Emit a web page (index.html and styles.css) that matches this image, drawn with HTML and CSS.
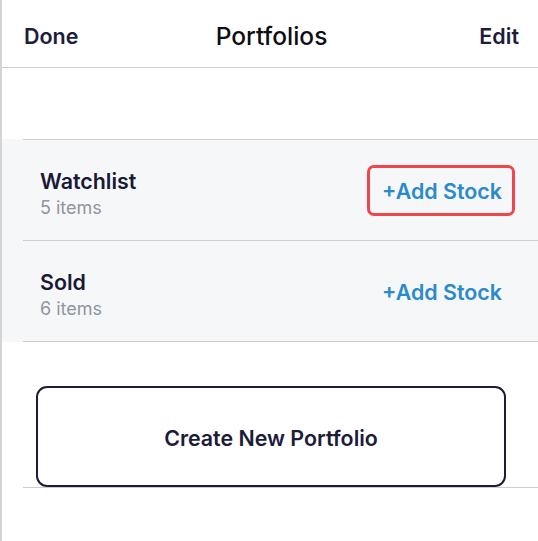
FILE: index.html
```html
<!DOCTYPE html>
<html>
<head>
<meta charset="utf-8">
<link rel="stylesheet" href="styles.css">
</head>
<body>
<div class="screen">
  <header class="nav">
    <span class="nav-btn">Done</span>
    <span class="nav-title">Portfolios</span>
    <span class="nav-btn nav-right">Edit</span>
  </header>
  <div class="spacer"></div>
  <section class="list">
    <div class="rows">
      <div class="row">
        <div class="info">
          <div class="name">Watchlist</div>
          <div class="count">5 items</div>
        </div>
        <span class="add highlight">+Add Stock</span>
      </div>
      <div class="row">
        <div class="info">
          <div class="name">Sold</div>
          <div class="count">6 items</div>
        </div>
        <span class="add">+Add Stock</span>
      </div>
    </div>
  </section>
  <section class="create">
    <div class="create-inner">
      <div class="create-btn">Create New Portfolio</div>
    </div>
  </section>
</div>
</body>
</html>
```

FILE: styles.css
```css
html, body {
  margin: 0;
  padding: 0;
  background: #ffffff;
}
body {
  font-family: Inter, "Noto Sans", "Liberation Sans", sans-serif;
}
.screen {
  width: 536px;
  height: 541px;
  border-left: 2px solid #d4d4d6;
  background: #ffffff;
  overflow: hidden;
}
.nav {
  box-sizing: border-box;
  height: 68px;
  border-bottom: 1px solid #cfcfd2;
  display: grid;
  grid-template-columns: 1fr auto 1fr;
  align-items: center;
  padding: 4px 19px 0 22px;
}
.nav-btn {
  font-size: 21.5px;
  font-weight: 600;
  color: #1d1d3d;
}
.nav-right {
  justify-self: end;
}
.nav-title {
  font-size: 24.5px;
  font-weight: 500;
  color: #0d0d14;
}
.spacer {
  height: 71px;
}
.list {
  background: #f6f7f9;
  padding-left: 21px;
}
.rows {
  border-top: 1px solid #cdced2;
}
.row {
  height: 100px;
  border-bottom: 1px solid #cdced2;
  display: flex;
  justify-content: space-between;
  align-items: flex-start;
  padding: 0 36px 0 17px;
}
.info {
  padding-top: 28px;
}
.name {
  font-size: 21.4px;
  line-height: 26px;
  font-weight: 600;
  color: #1a1a36;
}
.count {
  margin-top: 1px;
  font-size: 18px;
  line-height: 26px;
  color: #9095a0;
}
.add {
  align-self: center;
  position: relative;
  font-size: 21.4px;
  line-height: 24px;
  font-weight: 600;
  color: #2b8acb;
  margin-top: 2px;
}
.highlight::after {
  content: "";
  position: absolute;
  left: -15px;
  right: -13px;
  top: -14px;
  bottom: -13px;
  border: 3px solid #f1444c;
  border-radius: 7px;
}
.create {
  padding-left: 21px;
}
.create-inner {
  padding: 44px 32px 0 13px;
  border-bottom: 1px solid #cdced2;
}
.create-btn {
  height: 101px;
  box-sizing: border-box;
  border: 2px solid #1c1c36;
  border-radius: 11px;
  display: flex;
  align-items: center;
  justify-content: center;
  padding-top: 3px;
  font-size: 21.4px;
  font-weight: 600;
  color: #1c1c38;
  background: #ffffff;
}
```
